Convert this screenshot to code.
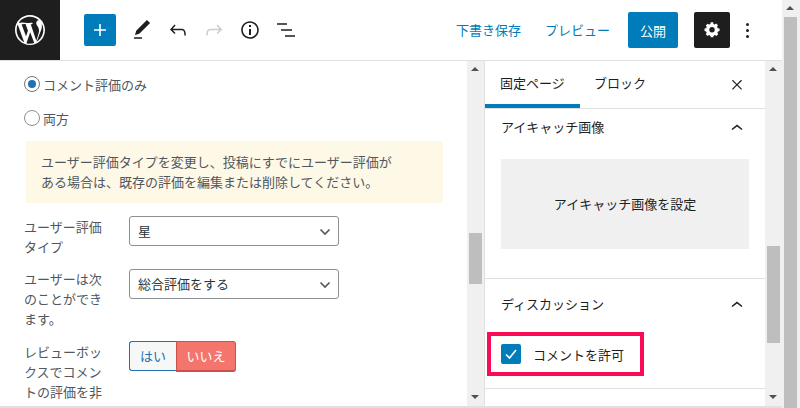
<div class="page">
  <div class="main">
    <header class="topbar">
      <div class="logo">
        <svg viewBox="0 0 20 20" width="30" height="30"><path fill="#fff" d="M20 10c0-5.510-4.490-10-10-10C4.480 0 0 4.490 0 10c0 5.520 4.480 10 10 10 5.510 0 10-4.480 10-10zM7.780 15.370L4.370 6.220c.55-.02 1.170-.08 1.170-.08.500-.06.440-1.130-.060-1.110 0 0-1.450.11-2.370.11-.18 0-.37 0-.58-.010C3.920 2.800 6.790 1.200 10 1.200c2.280 0 4.360.85 5.940 2.250-.01 0-.05 0-.07.010-1 0-1.710.87-1.710 1.810 0 .84.490 1.550 1.010 2.400.39.680.84 1.550.84 2.810 0 .87-.34 1.880-.78 3.290l-1.030 3.440-3.710-11.030c.62-.02.930-.19.930-.19.550-.05.480-.87-.06-.84 0 0-1.640.13-2.700.13-.97 0-2.630-.13-2.630-.13-.55-.03-.61.820-.06.840 0 0 .52.060 1.070.09l1.580 4.340-2.230 6.700zM17.410 10c.24-.64.74-1.870.43-4.250.7 1.290 1.050 2.710 1.050 4.250 0 3.290-1.730 6.240-4.400 7.780.97-2.590 1.940-5.200 2.920-7.780zM6.100 18.090C3.120 16.650 1.110 13.530 1.110 10c0-1.300.23-2.480.72-3.590C3.250 10.300 4.670 14.200 6.100 18.090zm4.030-6.630l2.690 7.270c-.9.300-1.850.47-2.820.47-.80 0-1.600-.11-2.360-.34 .83-2.430 1.670-4.890 2.490-7.400z"/></svg>
      </div>
      <div class="tools">
        <button class="add" aria-label="追加">
          <svg viewBox="0 0 24 24" width="24" height="24"><path fill="#fff" d="M18 11.200h-5.200V6h-1.600v5.200H6v1.600h5.200V18h1.600v-5.200H18z"/></svg>
        </button>
        <span class="icon"><svg viewBox="0 0 24 24" width="24" height="24"><path fill="#1e1e1e" d="M20.100 5.100 16.900 2 6.200 12.700 5 17l4.300-1.200L20.100 5.100zM4 20.800h8v-1.500H4v1.500z"/></svg></span>
        <span class="icon"><svg viewBox="0 0 24 24" width="24" height="24"><path fill="#1e1e1e" d="M18.300 11.700c-.6-.6-1.400-.9-2.300-.9H6.700l2.900-3.300-1.100-1-4.500 5L8.500 16l1-1-2.700-2.700H16c.5 0 .9.200 1.300.5 1 1 1 3.400 1 4.500v.3h1.500v-.2c0-1.500 0-4.300-1.500-5.700z"/></svg></span>
        <span class="icon"><svg viewBox="0 0 24 24" width="24" height="24"><path fill="#ccc" d="M15.600 6.500l-1.100 1 2.900 3.300H8c-.9 0-1.700.3-2.300.9-1.400 1.500-1.400 4.200-1.400 5.600v.2h1.500v-.3c0-1.100 0-3.500 1-4.500.3-.3.700-.5 1.300-.5h9.200L14.500 15l1.100 1.100 4.600-4.600-4.600-5z"/></svg></span>
        <span class="icon"><svg viewBox="0 0 24 24" width="24" height="24"><path fill="#1e1e1e" d="M12 3.200c-4.800 0-8.800 3.900-8.800 8.800 0 4.800 3.900 8.800 8.800 8.800 4.800 0 8.800-3.900 8.800-8.800 0-4.800-4-8.800-8.800-8.800zm0 16c-4 0-7.200-3.300-7.200-7.200C4.800 8 8 4.800 12 4.800s7.200 3.300 7.200 7.200c0 4-3.200 7.200-7.200 7.200zM11 17h2v-6h-2v6zm0-8h2V7h-2v2z"/></svg></span>
        <span class="icon"><svg viewBox="0 0 24 24" width="24" height="24"><path fill="#1e1e1e" d="M3 5.200h10v1.500H3zM7 11.200h11v1.500H7zM11 17.200h10v1.500H11z"/></svg></span>
      </div>
      <div class="actions">
        <span class="link">下書き保存</span>
        <span class="link prev">プレビュー</span>
        <button class="publish">公開</button>
        <button class="gear" aria-label="設定">
          <svg viewBox="0 0 24 24" width="24" height="24"><path fill="#fff" fill-rule="evenodd" d="M20.600 10.200 18.700 9.800a7 7 0 0 0-.7-1.600l1-1.700-2.100-2.100-1.700 1.100a7 7 0 0 0-1.600-.7L13.500 3h-3l-.4 1.900a7 7 0 0 0-1.600.7L6.800 4.500 4.700 6.600l1.100 1.700a7 7 0 0 0-.7 1.600L3.200 10.300v3l1.900.4c.2.600.4 1.100.7 1.600l-1.100 1.700 2.100 2.100 1.700-1.100c.5.300 1 .5 1.600.7l.4 1.900h3l.4-1.900c.6-.2 1.100-.4 1.600-.7l1.700 1.100 2.100-2.100-1-1.700c.3-.5.500-1 .7-1.600l1.900-.4v-3zM12 15a3.200 3.200 0 1 1 0-6.400 3.200 3.200 0 0 1 0 6.400z" transform="translate(1.800 1.800) scale(.85)"/></svg>
        </button>
        <span class="dots"><i></i><i></i><i></i></span>
      </div>
    </header>

    <div class="body">
      <section class="content">
        <div class="scrollpane">
          <label class="radio first"><span class="dot on"></span>コメント評価のみ</label>
          <label class="radio second"><span class="dot"></span>両方</label>
          <div class="notice">ユーザー評価タイプを変更し、投稿にすでにユーザー評価が<br />ある場合は、既存の評価を編集または削除してください。</div>
          <div class="row r1">
            <div class="lab">ユーザー評価<br />タイプ</div>
            <div class="select">星<svg class="chev" viewBox="0 0 12 8" width="12" height="8"><path fill="none" stroke="#50575e" stroke-width="1.600" d="M1.500 1.500 6 6l4.500-4.500"/></svg></div>
          </div>
          <div class="row r2">
            <div class="lab">ユーザーは次<br />のことができ<br />ます。</div>
            <div class="select">総合評価をする<svg class="chev" viewBox="0 0 12 8" width="12" height="8"><path fill="none" stroke="#50575e" stroke-width="1.600" d="M1.500 1.500 6 6l4.500-4.500"/></svg></div>
          </div>
          <div class="row r3">
            <div class="lab">レビューボッ<br />クスでコメン<br />トの評価を非</div>
            <div class="toggle"><span class="yes">はい</span><span class="no">いいえ</span></div>
          </div>
        </div>
        <div class="sb inner-l">
          <span class="up"></span>
          <span class="gap-a"></span>
          <span class="thumb"></span>
          <span class="fill"></span>
          <span class="down"></span>
        </div>
      </section>

      <aside class="side">
        <div class="sidepane">
          <div class="tabs">
            <span class="tab active">固定ページ</span>
            <span class="tab">ブロック</span>
            <svg class="close" viewBox="0 0 24 24" width="20" height="20"><path fill="#1e1e1e" d="M13 11.800l5-5-1.100-1-5 5-4.900-5-1 1 5 5-5 4.900 1 1 5-5 5 5 1-1z"/></svg>
          </div>
          <div class="panel featured">
            <div class="ph"><span>アイキャッチ画像</span><svg viewBox="0 0 24 24" width="24" height="24"><path fill="#1e1e1e" d="M6.500 14.900 12 10.500l5.500 4.400-.9 1.200-4.600-3.600-4.500 3.600-1-1.200z"/></svg></div>
            <div class="setimg">アイキャッチ画像を設定</div>
          </div>
          <div class="panel disc">
            <div class="ph"><span>ディスカッション</span><svg viewBox="0 0 24 24" width="24" height="24"><path fill="#1e1e1e" d="M6.500 14.900 12 10.500l5.500 4.400-.9 1.200-4.600-3.600-4.500 3.600-1-1.200z"/></svg></div>
            <div class="hl">
              <span class="check"><svg viewBox="0 0 20 20" width="20" height="20"><path fill="none" stroke="#fff" stroke-width="1.600" d="M5 10.500l3.500 3.500L15 6"/></svg></span>
              <span>コメントを許可</span>
            </div>
          </div>
        </div>
        <div class="sb inner-r">
          <span class="up"></span>
          <span class="gap-b"></span>
          <span class="thumb"></span>
          <span class="fill"></span>
          <span class="down"></span>
        </div>
      </aside>
    </div>
  </div>
  <div class="sb outer">
    <span class="up"></span>
    <span class="thumb"></span>
  </div>
</div>

<style>
  :global(body) { margin: 0; background: #fff; }
  .page {
    display: flex; width: 800px; height: 408px; overflow: hidden;
    font-family: "Noto Sans CJK JP", "Liberation Sans", sans-serif;
    font-size: 13px; color: #1e1e1e;
  }
  .main { width: 782px; display: flex; flex-direction: column; }
  .topbar { height: 60px; box-sizing: content-box; border-bottom: 1px solid #e0e0e0; display: flex; align-items: center; flex: none; }
  .logo { width: 60px; height: 60px; background: #1e1e1e; display: flex; align-items: center; justify-content: center; }
  .tools { display: flex; align-items: center; margin-left: 24px; }
  .add { width: 32px; height: 32px; padding: 4px; border: 0; border-radius: 2px; background: #007cba; margin-right: 8px; }
  .icon { width: 36px; height: 36px; display: flex; align-items: center; justify-content: center; }
  .actions { margin-left: auto; margin-right: 17px; display: flex; align-items: center; }
  .link { color: #007cba; font-size: 13px; margin-bottom: 2px; }
  .prev { margin-left: 24px; }
  .publish { width: 50px; height: 36px; margin-left: 18px; border: 0; border-radius: 2px; background: #007cba; color: #fff; font: inherit; }
  .gear { width: 36px; height: 36px; margin-left: 16px; padding: 6px; border: 0; border-radius: 2px; background: #1e1e1e; }
  .dots { width: 35px; display: flex; flex-direction: column; align-items: center; gap: 3px; }
  .dots i { width: 3px; height: 3px; background: #1e1e1e; border-radius: 50%; }
  .body { flex: 1; display: flex; min-height: 0; border-bottom: 2px solid #e0e0e0; }
  .content { width: 485px; display: flex; flex: none; }
  .scrollpane { width: 467px; overflow: hidden; padding-left: 24px; box-sizing: border-box; color: #50575e; }
  .radio { display: flex; align-items: center; height: 20px; font-size: 13px; }
  .radio.first { margin-top: 13px; }
  .radio.second { margin-top: 14px; }
  .dot { width: 14px; height: 14px; border: 1px solid #8c8f94; border-radius: 50%; margin-right: 3px; position: relative; background: #fff; }
  .dot.on { border-color: #767676; }
  .dot.on::after { content: ""; position: absolute; left: 3px; top: 3px; width: 8px; height: 8px; border-radius: 50%; background: #2271b1; }
  .notice { margin: 13px 0 0 2px; width: 417px; height: 62px; box-sizing: border-box; background: #fef8e7; padding: 11px 15px; line-height: 20px; font-size: 13px; }
  .row { display: flex; }
  .lab { width: 105px; line-height: 20px; font-size: 13px; flex: none; }
  .r1 .lab, .r3 .lab { padding-top: 1px; }
  .r1 { margin-top: 13px; height: 38px; }
  .r2 { margin-top: 15px; height: 58px; }
  .r3 { margin-top: 14px; }
  .select { width: 210px; height: 30px; box-sizing: border-box; border: 1px solid #8c8f94; border-radius: 3px; padding-left: 8px; line-height: 28px; position: relative; background: #fff; color: #2c3338; }
  .chev { position: absolute; right: 7px; top: 11px; }
  .toggle { display: flex; height: 31px; }
  .yes { width: 47px; box-sizing: border-box; border: 1px solid #2271b1; border-right: 0; border-radius: 3px 0 0 3px; background: #f6f7f7; color: #2271b1; text-align: center; line-height: 28px; height: 30px; }
  .no { width: 60px; box-sizing: border-box; border: 1px solid #c9524c; border-bottom-width: 2px; border-radius: 0 3px 3px 0; background: #f4756c; color: #fff; text-align: center; line-height: 28px; }
  .side { width: 297px; display: flex; flex: none; }
  .sidepane { width: 280px; overflow: hidden; flex: none; }
  .tabs { height: 47px; border-bottom: 1px solid #e0e0e0; position: relative; display: flex; font-size: 13px; }
  .tab { width: 95px; box-sizing: border-box; padding: 12px 0 0 15px; }
  .tab + .tab { padding-left: 14px; }
  .tab.active { box-shadow: inset 0 -4px 0 #007cba; }
  .close { position: absolute; right: 18px; top: 14px; }
  .panel { border-bottom: 1px solid #e0e0e0; padding: 0 16px; }
  .ph { display: flex; justify-content: space-between; align-items: center; font-size: 13px; }
  .featured { height: 169px; }
  .featured .ph { height: 34px; }
  .setimg { height: 90px; background: #f0f0f0; display: flex; align-items: center; justify-content: center; margin-top: 16px; padding-bottom: 2px; box-sizing: border-box; }
  .disc { height: 109px; }
  .disc .ph { height: 48px; }
  .hl { display: flex; align-items: center; margin: 5px 0 0 -14px; width: 157px; height: 44px; box-sizing: border-box; border: 4px solid #fb0a55; padding-left: 10px; gap: 12px; }
  .check { width: 20px; height: 20px; background: #007cba; border-radius: 2px; display: block; }
  .sb { width: 17px; display: flex; flex-direction: column; background: #f0f0f0; flex: none; }
  .sb .thumb { background: #bebebe; display: block; margin: 0 2px; }
  .sb .up, .sb .down { height: 17px; position: relative; flex: none; }
  .sb .up::after { content: ""; position: absolute; left: 4px; top: 6px; border: 4px solid transparent; border-top: 0; border-bottom: 4px solid #505050; }
  .sb .down::after { content: ""; position: absolute; left: 4px; top: 6px; border: 4px solid transparent; border-bottom: 0; border-top: 4px solid #505050; }
  .sb .fill { flex: 1; }
  .gap-a { height: 155px; }
  .gap-b { height: 168px; }
  .inner-l .thumb { height: 51px; }
  .inner-r .thumb { height: 97px; }
  .inner-l { border-right: 1px solid #e0e0e0; }
  .outer { width: 18px; height: 408px; }
  .outer .thumb { flex: 1; margin: 0 3px 0 2px; }
</style>
